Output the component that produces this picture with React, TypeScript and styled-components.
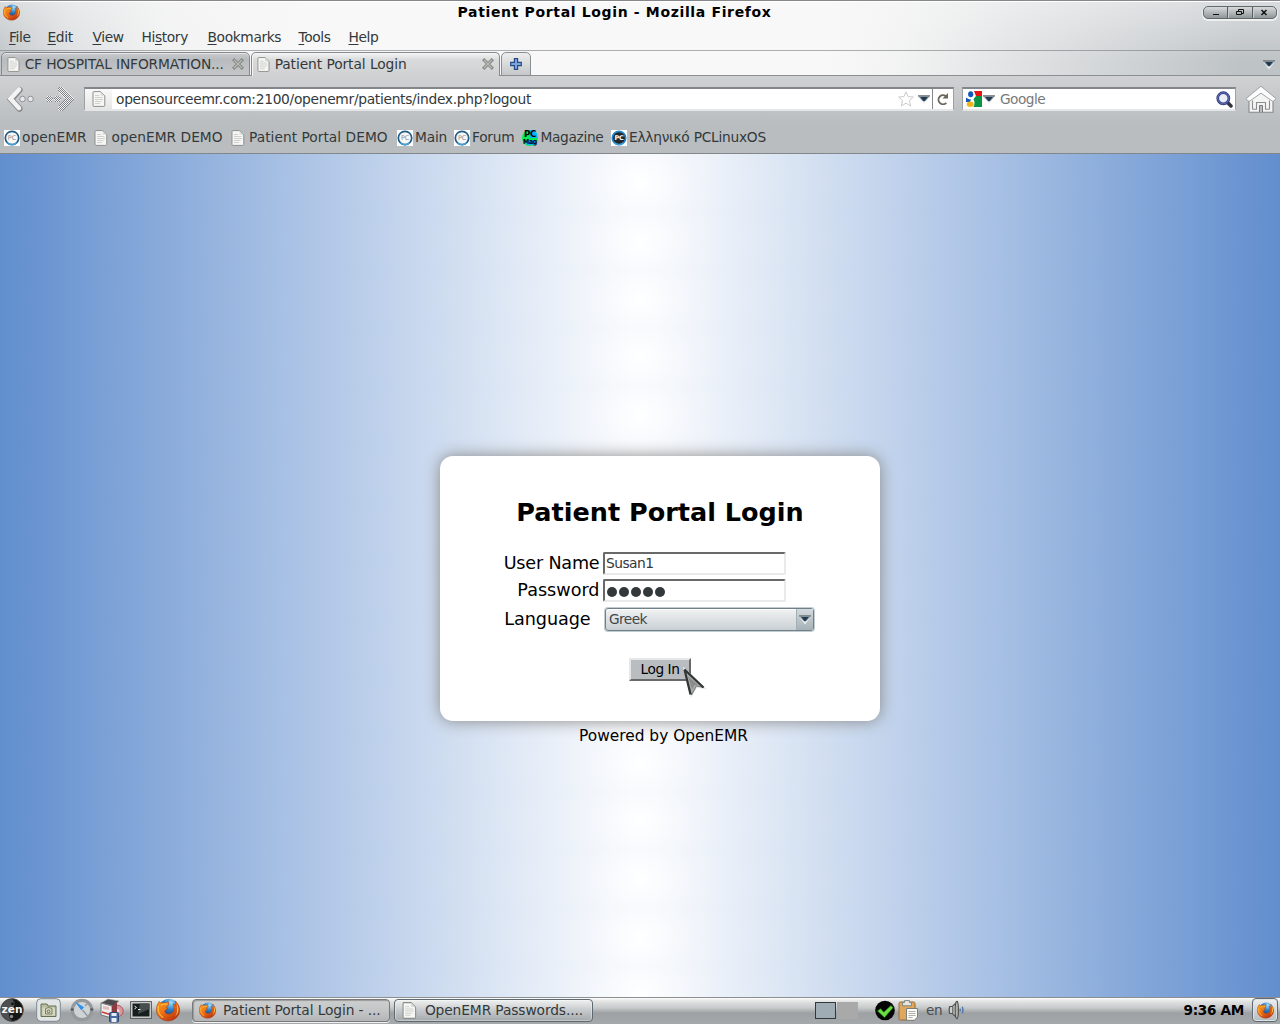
import React from "react";
import styled, { createGlobalStyle, css } from "styled-components";

const GlobalStyle = createGlobalStyle`
  * { box-sizing: border-box; }
  html, body { margin: 0; padding: 0; overflow: hidden; }
  body { font-family: "DejaVu Sans", sans-serif; font-size: 13.33px; color: #33393b; }
  svg { display: block; flex: none; }
`;

const Desktop = styled.div`
  width: 1280px;
  height: 1024px;
  display: flex;
  flex-direction: column;
  overflow: hidden;
  white-space: nowrap;
`;

const WindowTop = styled.header`
  height: 76px;
  flex: none;
  display: flex;
  flex-direction: column;
  border-top: 1px solid #86888a;
  box-shadow: inset 0 1px 0 #fff;
  background:
    linear-gradient(97deg, rgba(247, 247, 247, 0) 0, rgba(247, 247, 247, 0.55) 75px, rgba(247, 247, 247, 0.9) 165px, #f8f8f8 300px, #f8f8f8 830px, rgba(247, 247, 247, 0.92) 900px, rgba(247, 247, 247, 0) 1240px),
    linear-gradient(#d9dcde, #bec3c5 60px);
`;

const TitleBar = styled.div`
  height: 24px;
  display: flex;
  align-items: center;
  padding: 0 3px 2px;
`;

const WindowTitle = styled.h1`
  flex: 1;
  margin: 0 0 0 6px;
  text-align: center;
  font-size: 14px;
  line-height: 22px;
  letter-spacing: 0.65px;
  color: #000;
`;

const WindowButtons = styled.div`
  display: flex;
  width: 74px;
  height: 13px;
  margin-top: 1px;
  border: 1px solid #64696b;
  border-radius: 5px;
  overflow: hidden;
  box-shadow: 0 1px 0 1px #eef0f0;
  background: linear-gradient(#d8dada, #8f9698);
`;

const WindowButton = styled.span`
  flex: 1;
  display: flex;
  align-items: center;
  justify-content: center;
  & + & { border-left: 1px solid #585d5f; box-shadow: inset 1px 0 #c8cccd; }
`;

const MenuBar = styled.nav`
  height: 25px;
  display: flex;
  align-items: center;
  padding: 0 0 2px 9px;
  gap: 18.6px;
`;

const MenuItem = styled.span<{ $w: number }>`
  width: ${(p) => p.$w}px;
  margin-right: -0.6px;
  font-size: 13.8px;
  letter-spacing: -0.38px;
  line-height: 22px;
  text-underline-offset: 2px;
  u { text-decoration-thickness: 1px; }
`;

const TabStrip = styled.div`
  height: 26px;
  display: flex;
  align-items: stretch;
  border-top: 1px solid rgba(120, 124, 126, 0.6);
  padding: 1px 4px 0 1px;
  box-shadow: inset 0 -1px #8b8f92;
`;

const Tab = styled.div<{ $active?: boolean }>`
  width: 249px;
  height: 24px;
  display: flex;
  align-items: center;
  padding: 0 5px;
  margin-right: 1px;
  font-size: 13.8px;
  letter-spacing: -0.15px;
  border: 1px solid #85898b;
  border-radius: 5px 5px 0 0;
  background: linear-gradient(#c9cbcd, #b9bcbf 30%, #c4c6c8);
  box-shadow: inset 0 1px #e4e5e6;
  ${(p) =>
    p.$active &&
    css`
      border-bottom: 0;
      padding-bottom: 1px;
      letter-spacing: -0.08px;
      background: linear-gradient(#f5f5f5, #d9dadb 30%, #d0d1d3);
      box-shadow: inset 1px 1px #f5f5f5;
    `}
`;

const TabLabel = styled.span`
  flex: 1;
  margin-left: 4.5px;
  line-height: 20px;
`;

const NewTab = styled.div`
  width: 30px;
  height: 24px;
  display: flex;
  align-items: center;
  justify-content: center;
  border: 1px solid #8b8f92;
  border-radius: 5px 5px 0 0;
  background: linear-gradient(#ededed, #c5c7c9);
`;

const TabMenu = styled.div`
  margin: 7px 0 0 auto;
`;

const Toolbars = styled.section`
  height: 78px;
  flex: none;
  display: flex;
  flex-direction: column;
  border-bottom: 1px solid #82878c;
  background: linear-gradient(#d0d1d3, #b9bdbf 48px, #b9bdbf);
`;

const NavBar = styled.div`
  height: 46px;
  display: flex;
  align-items: center;
  padding: 0 3px 0 5px;
`;

const NavArrows = styled.div`
  width: 79px;
  display: flex;
  gap: 9px;
`;

const Field = styled.div<{ $w: number; $gap: number }>`
  width: ${(p) => p.$w}px;
  height: 24px;
  margin-right: ${(p) => p.$gap}px;
  display: flex;
  align-items: center;
  border: 1px solid #9da1a3;
  border-top: 2px solid #82868a;
  border-bottom: 2px solid #e4e6e7;
  background: #fff;
`;

const SiteIdentity = styled.div`
  width: 27px;
  height: 20px;
  display: flex;
  align-items: center;
  justify-content: center;
  background: linear-gradient(#f9f9f9, #e6e6e7);
`;

const Address = styled.span`
  flex: 1;
  font-size: 13.8px;
  letter-spacing: -0.3px;
  margin-left: 4px;
  line-height: 20px;
`;

const Reload = styled.div`
  width: 21px;
  height: 20px;
  margin-left: 1px;
  display: flex;
  align-items: center;
  justify-content: center;
  border-left: 1px solid #85898b;
`;

const SearchHint = styled.span`
  flex: 1;
  margin-left: 4px;
  font-size: 13.7px;
  letter-spacing: -0.53px;
  line-height: 20px;
  color: #777a7b;
`;

const BookmarkBar = styled.div`
  height: 31px;
  display: flex;
  align-items: center;
  padding-left: 4px;
`;

const Bookmark = styled.div<{ $w: number; $gap: number; $spacing?: number }>`
  width: ${(p) => p.$w}px;
  display: flex;
  align-items: center;
  gap: ${(p) => p.$gap}px;
  font-size: 13.75px;
  letter-spacing: ${(p) => p.$spacing ?? 0.03}px;
  line-height: 20px;
`;

const BookmarkLabel = styled.span`
  padding-bottom: 2px;
`;

const Page = styled.main`
  height: 843px;
  flex: none;
  display: flex;
  flex-direction: column;
  align-items: center;
  padding-left: 40px;
  padding-top: 302px;
  color: #000;
  background: radial-gradient(circle 641px at 640px 29px, #fff, #618ece) 0 0 / 1280px 58px repeat-y;
`;

const Card = styled.form`
  width: 440px;
  height: 265px;
  flex: none;
  display: flex;
  flex-direction: column;
  align-items: center;
  border-radius: 13px;
  background: #fff;
  box-shadow: 0 0 16px #888;
`;

const Heading = styled.h2`
  margin: 39px 0 0;
  font-size: 25.5px;
  line-height: 34px;
`;

const Fields = styled.div`
  align-self: flex-start;
  display: grid;
  grid-template-columns: 160px 214px;
  grid-template-rows: 27px 27px 31px;
  column-gap: 3px;
  margin-top: 21px;
  align-items: center;
`;

const Label = styled.label<{ $inset?: number; $spacing?: number }>`
  text-align: right;
  padding: 0 ${(p) => p.$inset ?? 0.5}px 2px 0;
  font-size: 17.6px;
  letter-spacing: ${(p) => p.$spacing ?? 0}px;
  line-height: 24px;
`;

const TextBox = styled.div`
  width: 183px;
  height: 23px;
  display: flex;
  align-items: center;
  padding: 0 0 0 1px;
  font-size: 13.8px;
  letter-spacing: -0.55px;
  line-height: 17px;
  color: #33393b;
  border: 2px solid;
  border-color: #696969 #eaeaea #eaeaea #696969;
  border-radius: 2px;
`;

const Dots = styled.div`
  display: flex;
  gap: 2px;
  padding: 3px 0 0 1px;
`;

const Dot = styled.i`
  width: 10px;
  height: 10px;
  border-radius: 50%;
  background: #33393b;
`;

const Select = styled.div`
  width: 209px;
  height: 23px;
  margin-left: 2px;
  display: flex;
  align-items: center;
  padding-left: 3px;
  font-size: 13.7px;
  letter-spacing: -0.55px;
  line-height: 19px;
  border: 1px solid #6f8088;
  border-radius: 3px;
  box-shadow: 0 0 0 1px #c3cdd1, inset 0 1px #fff;
  background: linear-gradient(#f1f2f3, #dfe3e5 45%, #c9d0d4);
  color: #40474a;
`;

const SelectArrow = styled.div`
  width: 17px;
  height: 21px;
  margin-left: auto;
  display: flex;
  align-items: center;
  justify-content: center;
  border-left: 1px solid #a3b0b5;
  background: linear-gradient(#d3dadd, #a5b1b7);
`;

const Submit = styled.div`
  position: relative;
  width: 62px;
  height: 23px;
  margin-top: 23px;
  font-size: 13.7px;
  letter-spacing: -0.45px;
  line-height: 18px;
  text-align: center;
  border: 2px solid;
  border-color: #e6e7e8 #696969 #696969 #e6e7e8;
  background: #b9bdbf;
`;

const Pointer = styled.div`
  position: absolute;
  left: 52px;
  top: 7px;
`;

const Powered = styled.p`
  margin: 5px 0 0 7px;
  font-size: 15.4px;
  line-height: 20px;
`;

const Taskbar = styled.footer`
  height: 27px;
  flex: none;
  display: flex;
  align-items: center;
  padding-bottom: 2px;
  border-top: 1px solid #8c8e90;
  background: linear-gradient(#fdfdfd 0, #e4e5e5 3px, #c6c9ca 10px, #9da1a3 15px, #a5a9ab);
`;

const Launchers = styled.div`
  width: 192px;
  display: flex;
  align-items: center;
`;

const Launcher = styled.span<{ $gap: number }>`
  margin-right: ${(p) => p.$gap}px;
`;

const Task = styled.div<{ $pressed?: boolean; $w: number }>`
  width: ${(p) => p.$w}px;
  height: 23px;
  margin-right: 4px;
  display: flex;
  align-items: center;
  gap: ${(p) => (p.$pressed ? 7 : 8)}px;
  padding-left: ${(p) => (p.$pressed ? 6 : 7)}px;
  font-size: 13.8px;
  line-height: 20px;
  letter-spacing: -0.12px;
  border: 1px solid #5e6a70;
  border-radius: 4px;
  background: linear-gradient(#eff0f0, #c6c9cb 50%, #a3a9ac);
  box-shadow: inset 0 0 0 1px rgba(255, 255, 255, 0.35);
  ${(p) =>
    p.$pressed &&
    css`
      border-color: #77797a;
      background: linear-gradient(#cdcfcf, #c3c5c6 50%, #b4b6b7);
      box-shadow: inset 1px 1px 1px #999, 0 1px #f2f2f2;
    `}
`;

const Pager = styled.div`
  display: flex;
  width: 60px;
  margin-left: 218px;
  gap: 1px;
`;

const PagerCell = styled.span<{ $current?: boolean }>`
  width: 21px;
  height: 17px;
  background: #a9a9a9;
  ${(p) => p.$current && css`border: 1px solid #30383d; background: #9facb4;`}
`;

const Tray = styled.div`
  display: flex;
  align-items: center;
  gap: 3px;
`;

const Locale = styled.span`
  margin: 0 3px 0 4px;
  font-size: 13.6px;
  letter-spacing: -0.4px;
  color: #4a4d4f;
`;

const Clock = styled.time`
  margin-left: auto;
  font-size: 13.6px;
  letter-spacing: -0.3px;
  font-weight: bold;
  color: #000;
`;

const CornerButton = styled.div`
  width: 26px;
  height: 24px;
  margin: 0 2px 0 8px;
  display: flex;
  align-items: center;
  justify-content: center;
  border: 1px solid #5e6a76;
  border-radius: 4px;
  box-shadow: inset 0 0 0 1px #dfe3e6;
  background: linear-gradient(#eeefef, #b6bbbe);
`;

const FirefoxIcon = ({ size = 18 }: { size?: number }) => (
  <svg width={size} height={size} viewBox="0 0 24 24">
    <defs>
      <linearGradient id="fox" x1="0" y1="0" x2=".7" y2="1">
        <stop offset="0" stopColor="#f7a31e" />
        <stop offset=".5" stopColor="#ed7218" />
        <stop offset="1" stopColor="#b8320f" />
      </linearGradient>
      <radialGradient id="globe" cx=".6" cy=".2" r=".8">
        <stop offset="0" stopColor="#a2e0ff" />
        <stop offset=".45" stopColor="#2c80c9" />
        <stop offset="1" stopColor="#143468" />
      </radialGradient>
    </defs>
    <circle cx="13" cy="10.5" r="9.8" fill="url(#globe)" />
    <path d="M3 3.5 5.2 5Q8 4 10 5L12 2.8 12.8 6.8 10.3 9 11.3 10.8 8.6 13Q10 17 14.4 15.8 18.5 14.4 18.2 9.5L17 5.7 20 7.7 19.2 2.8Q23.7 7 23.8 12.5A11.8 11.3 0 0 1 .3 13Q0 7.5 3 3.5Z" fill="url(#fox)" stroke="#a43511" strokeWidth=".5" />
    <path d="M20.5 5Q25 13 19 19 22.7 13 20.5 5Z" fill="#ffd24a" />
    <path d="M2.5 8Q.7 15 7 19.5M5 7.5Q8 5 11.4 6.5" fill="none" stroke="#ffbd36" strokeWidth="1.2" />
  </svg>
);

const DocIcon = ({ h = 16 }: { h?: number }) => (
  <svg width={(h * 14) / 16} height={h} viewBox="0 0 14 16">
    <path d="M1 1.5Q1 .6 1.9 .6H8.5L12.8 4.8V14.4Q12.8 15.4 11.8 15.4H2Q1 15.4 1 14.4Z" fill="#f6f6f4" stroke="#8d8f8b" />
    <path d="M8.5 .8V4.8H12.5Z" fill="#dcdcda" />
    <path d="M3 4.5H7M3 6.5H10.5M3 8.5H11M3 10.5H9.5M3 12.5H8" stroke="#cfd0cd" />
  </svg>
);

const CloseIcon = () => (
  <svg width="12" height="12" viewBox="0 0 12 12">
    <path d="M2.3 2.3 9.7 9.7M9.7 2.3 2.3 9.7" stroke="#858781" strokeWidth="3.2" strokeLinecap="square" />
    <path d="M2.4 2.4 9.6 9.6M9.6 2.4 2.4 9.6" stroke="#bcbeba" strokeWidth="1.2" strokeLinecap="square" />
  </svg>
);

const DropArrow = () => (
  <svg width="14" height="11" viewBox="0 0 14 11">
    <path d="M1 2.5H13L7 10.5Z" fill="#f0f3f5" opacity=".9" />
    <path d="M1 2H13L8.5 7H5.5Z" fill="#8f9aa1" />
    <path d="M3.2 3H10.8L7 7.8Z" fill="#203a52" />
    <path d="M1 1.8H13" stroke="#777c80" strokeWidth="1.3" />
  </svg>
);

const PcIcon = ({ dark }: { dark?: boolean }) => (
  <svg width="16" height="16" viewBox="0 0 16 16">
    <path fill="#fff" d="M0 0H16V16H0Z" />
    <circle cx="8" cy="8" r="6.7" fill={dark ? "#22272c" : "#f7f7f7"} stroke={dark ? "#2488c9" : "#1f5c86"} strokeWidth="1.7" />
    <path d="M3.4 12.9Q8 16.4 12.6 12.9" fill="none" stroke="#42a0d8" strokeWidth="1.4" />
    <text x="8" y="10.3" textAnchor="middle" fontSize="6.5" fontWeight={dark ? 700 : 400} fontFamily="DejaVu Sans" fill={dark ? "#fff" : "#8a8d8f"}>PC</text>
  </svg>
);

const PcMagIcon = () => (
  <svg width="16" height="16" viewBox="0 0 16 16">
    <circle cx="8" cy="8" r="8" fill="#06ed53" />
    <path d="M7 0H13V3H15V8H7Z" fill="#00b9f4" />
    <path d="M3 10H14V15H5Z" fill="#00b9f4" />
    <text x="2" y="7.2" textLength="12" lengthAdjust="spacingAndGlyphs" fontSize="8.6" fontWeight="700" fontFamily="DejaVu Sans" fill="#000">PC</text>
    <text x="1" y="14" textLength="14" lengthAdjust="spacingAndGlyphs" fontSize="7" fontWeight="700" fontFamily="DejaVu Sans" fill="#000">Mag</text>
  </svg>
);

const BackIcon = () => (
  <svg width="31" height="28" viewBox="0 0 31 28">
    <circle cx="17.5" cy="14" r="2.8" fill="#e6e7e7" stroke="#8f9293" />
    <circle cx="25.5" cy="14" r="2.8" fill="#e6e7e7" stroke="#8f9293" />
    <path d="M14.5 5 6 14.3 14.5 23.6" fill="none" stroke="#85898b" strokeWidth="6.2" strokeLinecap="round" />
    <path d="M14 4.5 5.5 13.8 14 23" fill="none" stroke="#f3f3f3" strokeWidth="4.6" strokeLinecap="round" />
  </svg>
);

const ForwardIcon = () => (
  <svg width="30" height="28" viewBox="0 0 30 28" shapeRendering="crispEdges">
    <defs>
      <pattern id="check" width="2" height="2" patternUnits="userSpaceOnUse">
        <path fill="#f4f4f5" d="M0 0H2V2H0Z" />
        <path fill="#7d8184" d="M0 0H1V1H0ZM1 1H2V2H1Z" />
      </pattern>
    </defs>
    <circle cx="4.5" cy="14" r="3.2" fill="url(#check)" />
    <circle cx="12.5" cy="14" r="3.2" fill="url(#check)" />
    <path d="M16 4.8 25 14 16 23.2" fill="none" stroke="url(#check)" strokeWidth="6" strokeLinecap="round" />
  </svg>
);

const StarIcon = () => (
  <svg width="16" height="16" viewBox="0 0 16 16">
    <path d="M8 .8 10.1 5.6 15.4 6 11.4 9.5 12.7 15 8 12.2 3.3 15 4.6 9.5.6 6 5.9 5.6Z" fill="#fff" stroke="#c9cbcc" />
  </svg>
);

const ReloadIcon = () => (
  <svg width="12" height="12" viewBox="0 0 12 12">
    <path d="M8.8 3.2A4.5 4.5 0 1 0 9.3 9.8" fill="none" stroke="#6b645b" strokeWidth="1.8" />
    <path d="M11 0V5.5H5.6Z" fill="#6b645b" />
  </svg>
);

const GoogleIcon = () => (
  <svg width="16" height="16" viewBox="0 0 16 16">
    <path fill="#fff" d="M0 0H16V16H0Z" />
    <path fill="#e81411" d="M8 0H16V5H10Z" />
    <path fill="#0b9444" d="M10 5H16V16H7.5Q9.5 12 7.5 8Z" />
    <ellipse cx="4.7" cy="3.2" rx="2.6" ry="3" fill="#1459ba" />
    <path d="M0 6.5Q3 8.8 5 8.5L4 11H0Z" fill="#1459ba" />
    <ellipse cx="4.2" cy="13.2" rx="3.5" ry="2.6" fill="#f1b51c" />
  </svg>
);

const SearchIcon = () => (
  <svg width="17" height="17" viewBox="0 0 17 17">
    <path d="m11 11 4 4" stroke="#32333d" strokeWidth="3.5" strokeLinecap="round" />
    <circle cx="7.3" cy="7.3" r="5.6" fill="#e9edf8" stroke="#313b82" strokeWidth="2.7" />
    <circle cx="7.3" cy="7.3" r="5.6" fill="none" stroke="#7583c2" strokeWidth=".8" />
  </svg>
);

const HomeIcon = () => (
  <svg width="32" height="29" viewBox="0 0 32 29">
    <path d="M4 14V27.3H28V14L16 5Z" fill="#f4f4f4" stroke="#85888a" strokeWidth="1.1" />
    <path d="M7.5 24.3V15.5M24.5 24.3V15.5M7.5 24.3H11.5V17.5H20.5V24.3H24.5" fill="none" stroke="#8a8d8e" strokeWidth="1.1" />
    <path d="M14.5 27V20.5H17.5V27" fill="#babdbf" stroke="#76797a" />
    <path d="M16 1.2 1.2 13.4Q2.2 16.8 4.6 16.2L16 8.2 27.4 16.2Q29.8 16.8 30.8 13.4Z" fill="#fbfbfb" stroke="#a0a3a4" />
  </svg>
);

const PlusIcon = () => (
  <svg width="12" height="12" viewBox="0 0 12 12">
    <path d="M4.4 .7H7.6V4.4H11.3V7.6H7.6V11.3H4.4V7.6H.7V4.4H4.4Z" fill="#7ba4d8" stroke="#244b87" strokeWidth="1.2" />
  </svg>
);

const CursorIcon = () => (
  <svg width="24" height="32" viewBox="0 0 24 32">
    <path d="M1.5 2.5 20.5 20.5 13.5 19.5 8.5 28Z" fill="#a3a3a3" stroke="#e9e9e9" strokeWidth="2.4" />
    <path d="M1.5 2.5 20.5 20.5 13.5 19 8.5 28Z" fill="#a9a9a9" stroke="#777b79" strokeWidth="1" />
    <path d="M1.5 2.5 20.5 20.5M1.5 2.5 7.5 27.5" stroke="#303633" strokeWidth="2.2" fill="none" />
    <path d="M5 9.5 15 18 11.5 18 9 22Z" fill="#8b8b8b" />
  </svg>
);

const ZenIcon = () => (
  <svg width="24" height="24" viewBox="0 0 24 24">
    <circle cx="12" cy="12" r="11.4" fill="#151515" stroke="#555" strokeWidth=".8" />
    <path d="M12 1A11 11 0 0 0 12 23Q6 17 12 12 17 6 12 1Z" fill="#4e4f50" />
    <circle cx="12.5" cy="5.7" r="1.3" fill="#090909" />
    <circle cx="11.5" cy="18.5" r="1.7" fill="#8b8b8b" />
    <text x="12" y="15" textAnchor="middle" textLength="21" lengthAdjust="spacingAndGlyphs" fontSize="11" fontWeight="700" fontFamily="DejaVu Sans" fill="#f6f6f6">zen</text>
  </svg>
);

const FolderIcon = () => (
  <svg width="25" height="24" viewBox="0 0 25 24">
    <rect x=".7" y=".7" width="23.6" height="22.6" rx="4" fill="#e2e5e6" stroke="#7c8992" />
    <path d="M5 6H11L12 8H20V18.5H5Z" fill="#b8bda1" stroke="#697052" />
    <path d="M6.5 9.5H19V17.5H6.5Z" fill="#d6d9c2" />
    <path d="m9.5 10.5 3-1 3.5 1v5.5h-6.5Z" fill="none" stroke="#777f60" />
    <circle cx="12.6" cy="13.4" r="1.4" fill="none" stroke="#686f52" />
  </svg>
);

const GaugeIcon = () => (
  <svg width="24" height="24" viewBox="0 0 24 24">
    <circle cx="12" cy="12" r="9.7" fill="#ced3d6" stroke="#96999b" strokeWidth="3.2" />
    <path d="M.8 11.5H3.6M20.4 11.5h2.8" stroke="#4f5355" strokeWidth="2" />
    <path d="m6.5 5 7 4.5-2.2 2.2Z" fill="#2b92eb" stroke="#2b92eb" />
    <path d="m12.5 12 5 6M15 8l2.5-2.5" stroke="#8d979c" strokeWidth="1.3" />
  </svg>
);

const PackageIcon = () => (
  <svg width="24" height="25" viewBox="0 0 24 25">
    <circle cx="17.5" cy="13" r="5.7" fill="#db9699" stroke="#a95961" />
    <circle cx="17.5" cy="13" r="2" fill="#f1dfe1" />
    <path d="M1 5 8 1 19 3 13 8Z" fill="#4b494b" stroke="#aaa" strokeWidth=".6" />
    <path d="m1 5 11 3v12L1 17Z" fill="#ededee" stroke="#72767a" />
    <path d="m12 8 5-4v12l-5 4Z" fill="#8c3a40" />
    <path d="m3 8 6 1v3L3 11Z" fill="#e3b9b9" />
    <path d="m2 14 8 2.4" stroke="#c73d3d" strokeWidth="1.6" />
    <rect x="9.5" y="14.5" width="9" height="9.5" rx="1" fill="#466b9f" stroke="#294a75" />
    <path d="M11.5 15h5v3h-5Zm0 5h5v4h-5Z" fill="#e6edf4" />
  </svg>
);

const TerminalIcon = () => (
  <svg width="22" height="18" viewBox="0 0 22 18">
    <rect x=".6" y=".6" width="20.8" height="16.8" fill="#d3d5d4" stroke="#535958" />
    <path d="M2.5 2.5H19.5V15.5H2.5Z" fill="#171f1e" />
    <path d="M10 2.5H19.5V8L8 13Z" fill="#454e4d" />
    <path d="m4.5 5 2 1.5-2 1.5M8 8.5h2.5" fill="none" stroke="#edf0ef" />
  </svg>
);

const CheckIcon = () => (
  <svg width="20" height="21" viewBox="0 0 20 21">
    <circle cx="10" cy="10.5" r="9.8" fill="#050505" />
    <path d="m2.5 11 3-2.3 3.3 3.5L16 5.5l2 2.2L9.5 17.5Z" fill="#69df42" stroke="#258018" strokeWidth=".7" />
  </svg>
);

const ClipboardIcon = () => (
  <svg width="21" height="21" viewBox="0 0 21 21">
    <rect x="1" y="2" width="16" height="18" rx="1.5" fill="#dfa75c" stroke="#9b692f" />
    <path d="M6.5 .6h5v2h2v3.2h-9V2.6h2Z" fill="#e5e6e3" stroke="#828680" />
    <path d="M8.5 8.5h11v8.5l-3 3.3h-8Z" fill="#fafaf7" stroke="#7b7f78" />
    <path d="M10.5 11.5h7M10.5 13.5h7M10.5 15.5h7M10.5 17.5h4" stroke="#aeb2aa" />
  </svg>
);

const SpeakerIcon = () => (
  <svg width="17" height="20" viewBox="0 0 17 20">
    <path d="M1.8 6.5H4.5L9 2V18L4.5 13.5H1.8Q.6 10 1.8 6.5Z" fill="#d0d0ca" stroke="#4f524f" strokeWidth="1.2" />
    <path d="M4.8 7v6" stroke="#5c5f5c" strokeWidth="1.2" />
    <ellipse cx="8.8" cy="10" rx="1.6" ry="8.6" fill="#b4b5b0" stroke="#4f524f" strokeWidth="1.2" />
    <path d="M12.2 8.7v2.6M14.3 6.8q1.4 3.2 0 6.4" stroke="#5077ae" strokeWidth="1.5" fill="none" />
  </svg>
);

const menus: [string, string, string, number][] = [
  ["", "F", "ile", 20.5],
  ["", "E", "dit", 27],
  ["", "V", "iew", 31],
  ["Hi", "s", "tory", 48],
  ["", "B", "ookmarks", 73],
  ["", "T", "ools", 32],
  ["", "H", "elp", 32],
];

const bookmarks = [
  { label: "openEMR", icon: <PcIcon />, width: 90, gap: 2 },
  { label: "openEMR DEMO", icon: <DocIcon />, width: 137, gap: 3.5 },
  { label: "Patient Portal DEMO", icon: <DocIcon />, width: 166, gap: 4 },
  { label: "Main", icon: <PcIcon />, width: 57, gap: 2, spacing: -0.2 },
  { label: "Forum", icon: <PcIcon />, width: 68, gap: 2, spacing: -0.25 },
  { label: "Magazine", icon: <PcMagIcon />, width: 89, gap: 2.5, spacing: -0.35 },
  { label: "Ελληνικό PCLinuxOS", icon: <PcIcon dark />, width: 170, gap: 2, spacing: -0.25 },
];

export default function App() {
  return (
    <Desktop>
      <GlobalStyle />
      <WindowTop>
        <TitleBar>
          <FirefoxIcon size={17} />
          <WindowTitle>Patient Portal Login - Mozilla Firefox</WindowTitle>
          <WindowButtons>
            <WindowButton>
              <svg width="8" height="7"><path d="M1 5.5H7" stroke="#111" /></svg>
            </WindowButton>
            <WindowButton>
              <svg width="8" height="7"><path d="M2.5 2V.5H7.5V4.5H6M.5 2.5H5.5V5.5H.5Z" fill="none" stroke="#111" /></svg>
            </WindowButton>
            <WindowButton>
              <svg width="8" height="7"><path d="m1.5 1 5 5m0-5-5 5" stroke="#111" strokeWidth="1.5" /></svg>
            </WindowButton>
          </WindowButtons>
        </TitleBar>
        <MenuBar>
          {menus.map(([pre, key, post, w]) => (
            <MenuItem key={pre + key + post} $w={w}>{pre}<u>{key}</u>{post}</MenuItem>
          ))}
        </MenuBar>
        <TabStrip>
          <Tab>
            <DocIcon h={15} />
            <TabLabel>CF HOSPITAL INFORMATION...</TabLabel>
            <CloseIcon />
          </Tab>
          <Tab $active>
            <DocIcon h={15} />
            <TabLabel>Patient Portal Login</TabLabel>
            <CloseIcon />
          </Tab>
          <NewTab><PlusIcon /></NewTab>
          <TabMenu><DropArrow /></TabMenu>
        </TabStrip>
      </WindowTop>

      <Toolbars>
        <NavBar>
          <NavArrows><BackIcon /><ForwardIcon /></NavArrows>
          <Field $w={870} $gap={8}>
            <SiteIdentity><DocIcon h={16} /></SiteIdentity>
            <Address>opensourceemr.com:2100/openemr/patients/index.php?logout</Address>
            <StarIcon />
            <svg width="3" height="1" />
            <DropArrow />
            <Reload><ReloadIcon /></Reload>
          </Field>
          <Field $w={274} $gap={9}>
            <svg width="3" height="1" />
            <GoogleIcon />
            <DropArrow />
            <SearchHint>Google</SearchHint>
            <SearchIcon />
            <svg width="2" height="1" />
          </Field>
          <HomeIcon />
        </NavBar>
        <BookmarkBar>
          {bookmarks.map((b) => (
            <Bookmark key={b.label} $w={b.width} $gap={b.gap} $spacing={b.spacing}>
              {b.icon}
              <BookmarkLabel>{b.label}</BookmarkLabel>
            </Bookmark>
          ))}
        </BookmarkBar>
      </Toolbars>

      <Page>
        <Card>
          <Heading>Patient Portal Login</Heading>
          <Fields>
            <Label $spacing={-0.2}>User Name</Label>
            <TextBox>Susan1</TextBox>
            <Label>Password</Label>
            <TextBox><Dots><Dot /><Dot /><Dot /><Dot /><Dot /></Dots></TextBox>
            <Label $inset={9.5} $spacing={-0.08}>Language</Label>
            <Select>Greek<SelectArrow><DropArrow /></SelectArrow></Select>
          </Fields>
          <Submit>Log In<Pointer><CursorIcon /></Pointer></Submit>
        </Card>
        <Powered>Powered by OpenEMR</Powered>
      </Page>

      <Taskbar>
        <Launchers>
          <Launcher $gap={12}><ZenIcon /></Launcher>
          <Launcher $gap={9}><FolderIcon /></Launcher>
          <Launcher $gap={6}><GaugeIcon /></Launcher>
          <Launcher $gap={6}><PackageIcon /></Launcher>
          <Launcher $gap={4}><TerminalIcon /></Launcher>
          <Launcher $gap={0}><FirefoxIcon size={24} /></Launcher>
        </Launchers>
        <Task $pressed $w={198}><FirefoxIcon size={17} />Patient Portal Login - ...</Task>
        <Task $w={199}><DocIcon h={17} />OpenEMR Passwords....</Task>
        <Pager><PagerCell $current /><PagerCell /></Pager>
        <Tray>
          <CheckIcon />
          <ClipboardIcon />
          <Locale>en</Locale>
          <SpeakerIcon />
        </Tray>
        <Clock>9:36 AM</Clock>
        <CornerButton><FirefoxIcon size={17} /></CornerButton>
      </Taskbar>
    </Desktop>
  );
}
